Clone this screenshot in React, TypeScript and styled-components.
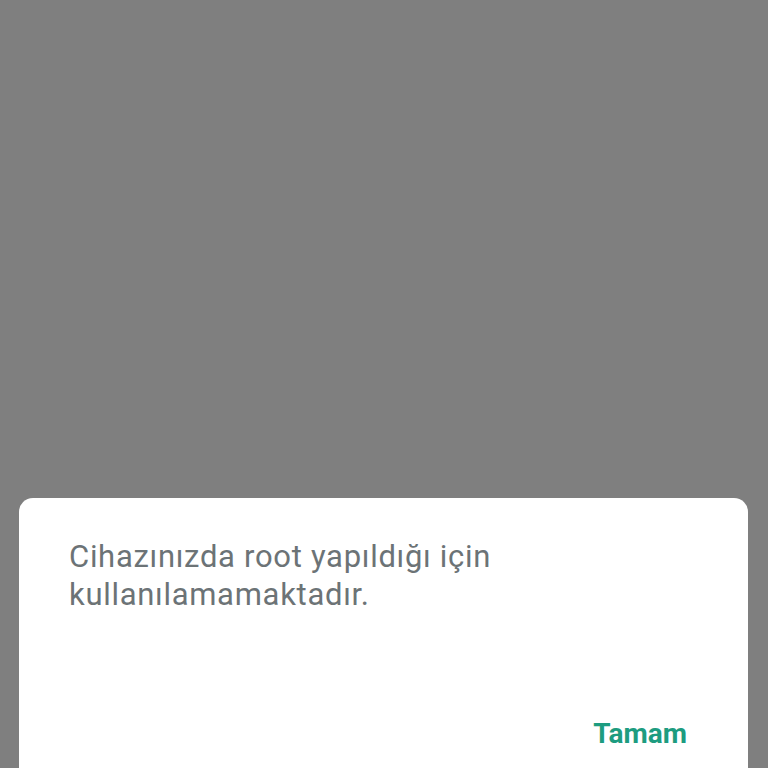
import React from 'react';
import styled, { createGlobalStyle } from 'styled-components';

const GlobalStyle = createGlobalStyle`
  html, body {
    margin: 0;
    padding: 0;
    background: #7f7f7f;
    font-family: Roboto, "Noto Sans", sans-serif;
  }
`;

const Scrim = styled.div`
  height: 768px;
  display: flex;
  flex-direction: column;
  justify-content: flex-end;
  overflow: hidden;
  background: #7f7f7f;
`;

const Dialog = styled.div`
  margin: 0 20px 0 19px;
  height: 270px;
  background: #ffffff;
  border-radius: 14px 14px 0 0;
  padding: 40px 61px 0 50px;
  box-sizing: border-box;
  display: flex;
  flex-direction: column;
`;

const Message = styled.p`
  margin: 0;
  font-size: 31px;
  line-height: 38px;
  color: #6c7376;
  letter-spacing: 0.7px;
`;

const Actions = styled.div`
  margin-top: auto;
  padding-bottom: 18px;
  display: flex;
  justify-content: flex-end;
`;

const ActionButton = styled.button`
  border: none;
  background: none;
  padding: 0;
  font-family: Roboto, "Noto Sans", sans-serif;
  font-size: 28px;
  font-weight: 700;
  color: #1d9c80;
  cursor: pointer;
`;

const App = () => {
  return (
    <>
      <GlobalStyle />
      <Scrim>
        <Dialog>
          <Message>
            Cihazınızda root yapıldığı için
            <br />
            kullanılamamaktadır.
          </Message>
          <Actions>
            <ActionButton>Tamam</ActionButton>
          </Actions>
        </Dialog>
      </Scrim>
    </>
  );
};

export default App;
